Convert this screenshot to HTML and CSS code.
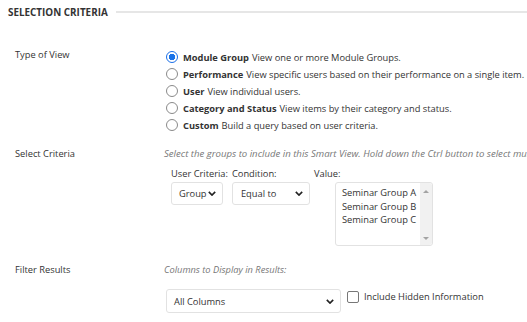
FILE: index.html
```html
<!DOCTYPE html>
<html lang="en">
<head>
  <meta charset="UTF-8">
  <title>Selection Criteria</title>
  <link rel="stylesheet" href="styles.css">
</head>
<body>

<div class="section-head">
  <span class="section-title">Selection Criteria</span>
  <span class="section-line"></span>
</div>

<div class="field field-view">
  <div class="field-label">Type of View</div>
  <div class="field-body">
    <div class="radio-row"><span class="radio checked"></span><b>Module Group</b> View one or more Module Groups.</div>
    <div class="radio-row"><span class="radio"></span><b>Performance</b> View specific users based on their performance on a single item.</div>
    <div class="radio-row"><span class="radio"></span><b>User</b> View individual users.</div>
    <div class="radio-row"><span class="radio"></span><b>Category and Status</b> View items by their category and status.</div>
    <div class="radio-row"><span class="radio"></span><b>Custom</b> Build a query based on user criteria.</div>
  </div>
</div>

<div class="field field-criteria">
  <div class="field-label">Select Criteria</div>
  <div class="field-body">
    <div class="hint">Select the groups to include in this Smart View. Hold down the Ctrl button to select multiple groups.</div>
    <div class="criteria">
      <div class="crit-col">
        <div class="crit-label">User Criteria:</div>
        <div class="select sel-group">Group <svg class="chev" viewBox="0 0 10 6"><path d="M1 1l4 4 4-4" /></svg></div>
      </div>
      <div class="crit-col">
        <div class="crit-label">Condition:</div>
        <div class="select sel-cond">Equal to <svg class="chev" viewBox="0 0 10 6"><path d="M1 1l4 4 4-4" /></svg></div>
      </div>
      <div class="crit-col">
        <div class="crit-label">Value:</div>
        <div class="listbox">
          <div class="list-items">
            <div>Seminar Group A</div>
            <div>Seminar Group B</div>
            <div>Seminar Group C</div>
          </div>
          <div class="scroll">
            <span class="arrow up"></span>
            <span class="arrow down"></span>
          </div>
        </div>
      </div>
    </div>
  </div>
</div>

<div class="field field-filter">
  <div class="field-label">Filter Results</div>
  <div class="field-body">
    <div class="hint">Columns to Display in Results:</div>
    <div class="filter-row">
      <div class="select sel-cols">All Columns <svg class="chev" viewBox="0 0 10 6"><path d="M1 1l4 4 4-4" /></svg></div>
      <label class="check"><span class="box"></span>Include Hidden Information</label>
    </div>
  </div>
</div>

</body>
</html>
```

FILE: styles.css
```css
body { margin:0; font-family:'Open Sans','Noto Sans',sans-serif; font-size:9.3px; color:#333; background:#fff; overflow:hidden; }

.section-head { display:flex; align-items:center; gap:8px; padding:4px 0 0 8px; height:16px; }
.section-title { font-weight:bold; text-transform:uppercase; font-size:9.9px; color:#333; }
.section-line { flex:1; height:2px; background:#e6e6e6; }

.field { display:flex; padding-left:15px; }
.field-label { width:149px; flex:none; line-height:16px; }
.field-body { flex:1; white-space:nowrap; }

.field-view { margin-top:27px; }
.field-view .field-body { padding-top:2px; margin-left:2px; }
.radio-row { display:flex; align-items:center; height:16.9px; }
.radio-row b { margin-right:3px; }
.radio { width:10px; height:10px; border:1px solid #8a8a8a; border-radius:50%; margin-right:5px; flex:none; box-sizing:content-box; }
.radio.checked { border-color:#1a6fe8; background:radial-gradient(circle, #1a73e8 0 3px, #fff 3.5px); }

.field-criteria { margin-top:13px; }
.hint { font-style:italic; color:#777; line-height:16px; }
.field-criteria .hint { font-size:9.6px; }
.criteria { display:flex; margin-top:5px; margin-left:7px; }
.crit-col { display:flex; flex-direction:column; margin-right:4px; }
.crit-label { line-height:14px; }
.select { display:flex; align-items:center; justify-content:space-between; height:23px; border:1px solid #e2e2e2; border-radius:3px; padding:0 6px 0 7px; box-sizing:border-box; background:#fff; margin-top:1px; }
.chev { width:8px; height:5px; fill:none; stroke:#222; stroke-width:2; }
.sel-group { width:52px; }
.sel-cond { width:78px; padding-left:8px; }
.listbox { display:flex; width:98px; height:64px; border:1px solid #e2e2e2; border-radius:3px; box-sizing:border-box; margin-left:21px; margin-top:1px; }
.list-items { flex:1; padding:3px 0 0 6px; line-height:13.5px; }
.scroll { width:12px; background:#f1f1f1; display:flex; flex-direction:column; justify-content:space-between; align-items:center; padding:7px 0 5px; border-radius:0 3px 3px 0; }
.arrow { width:0; height:0; border-left:3px solid transparent; border-right:3px solid transparent; }
.arrow.up { border-bottom:3px solid #a3a3a3; }
.arrow.down { border-top:3px solid #a3a3a3; }

.field-filter { margin-top:16px; }
.filter-row { display:flex; align-items:flex-start; margin-top:11px; }
.sel-cols { width:175px; height:24px; margin-left:2px; padding-left:7px; margin-top:0; }
.check { display:flex; align-items:center; margin-left:6px; margin-top:1px; }
.box { width:10px; height:10px; border:1px solid #777; border-radius:2px; margin-right:5px; }
```
